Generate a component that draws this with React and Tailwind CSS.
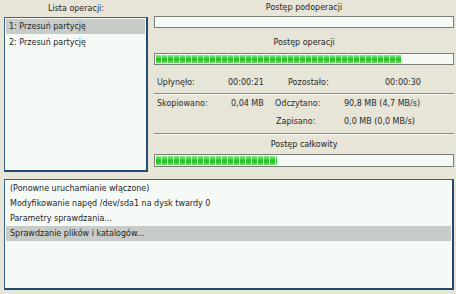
import React from "react";

const fill =
  "h-full bg-[repeating-linear-gradient(90deg,transparent_0px,transparent_5px,rgba(240,255,240,0.75)_5px,rgba(240,255,240,0.75)_6px),linear-gradient(180deg,#8fe88f_0%,#2cc82c_45%,#20c020_60%,#6ad86a_100%)]";

function Bar({ pct, h = "h-[12px]" }) {
  return (
    <div className={`${h} border border-[#7d7d77] bg-[#f5faf6] p-[1px]`}>
      {pct > 0 && <div className={fill} style={{ width: `${pct}%` }} />}
    </div>
  );
}

export default function App() {
  return (
    <div className="w-[456px] h-[294px] bg-[#e7e5d8] font-['DejaVu_Sans',sans-serif] text-[8px] text-[#1e1e1e] flex flex-col overflow-hidden">
      <div className="flex h-[173px]">
        <div className="w-[144px] ml-[4px] flex flex-col">
          <div className="h-[17px] flex items-center justify-center">Lista operacji:</div>
          <div className="h-[155px] border border-[#3a6490] border-r-2 border-b-2 border-r-[#24496f] border-b-[#24496f] bg-[#f5faf7] p-[1px] flex flex-col gap-[1px]">
            <div className="h-[15px] bg-[#c8ccc8] flex items-center pl-[3px]">1: Przesuń partycję</div>
            <div className="h-[15px] flex items-center pl-[3px]">2: Przesuń partycję</div>
          </div>
        </div>
        <div className="w-[300px] ml-[6px] flex flex-col">
          <div className="h-[16px] flex items-center justify-center">Postęp podoperacji</div>
          <Bar pct={0} />
          <div className="mt-[7px] h-[16px] flex items-center justify-center">Postęp operacji</div>
          <div className="mt-[2px]">
            <Bar pct={83} />
          </div>
          <div className="mt-[10px] h-[16px] flex items-center pl-[3px] text-[#2a2a2a]">
            <span className="w-[71px]">Upłynęło:</span>
            <span className="w-[60px]">00:00:21</span>
            <span className="w-[97px]">Pozostało:</span>
            <span>00:00:30</span>
          </div>
          <div className="mt-[2px] border-t border-[#8a897f] border-b border-b-[#fbfbf6]" />
          <div className="mt-[1px] h-[16px] flex items-center pl-[3px] text-[#2a2a2a]">
            <span className="w-[74px]">Skopiowano:</span>
            <span className="w-[44px]">0,04 MB</span>
            <span className="w-[69px]">Odczytano:</span>
            <span>90,8 MB (4,7 MB/s)</span>
          </div>
          <div className="mt-[2px] h-[16px] flex items-center pl-[122px] text-[#2a2a2a]">
            <span className="w-[68px]">Zapisano:</span>
            <span>0,0 MB (0,0 MB/s)</span>
          </div>
          <div className="mt-[3px] border-t border-[#8a897f] border-b border-b-[#fbfbf6]" />
          <div className="mt-[2px] h-[16px] flex items-center justify-center">Postęp całkowity</div>
          <div className="mt-[1px]">
            <Bar pct={41} h="h-[13px]" />
          </div>
        </div>
      </div>
      <div className="ml-[4px] mt-[6px] w-[450px] h-[111px] border border-[#3a6490] border-r-2 border-b-2 border-r-[#24496f] border-b-[#24496f] bg-[#f5faf7] p-[1px] flex flex-col">
        <div className="h-[15px] flex items-center pl-[4px]">(Ponowne uruchamianie włączone)</div>
        <div className="h-[15px] flex items-center pl-[4px]">Modyfikowanie napęd /dev/sda1 na dysk twardy 0</div>
        <div className="h-[15px] flex items-center pl-[4px]">Parametry sprawdzania...</div>
        <div className="h-[15px] flex items-center pl-[4px] bg-[#c8ccc8]">Sprawdzanie plików i katalogów...</div>
      </div>
    </div>
  );
}
